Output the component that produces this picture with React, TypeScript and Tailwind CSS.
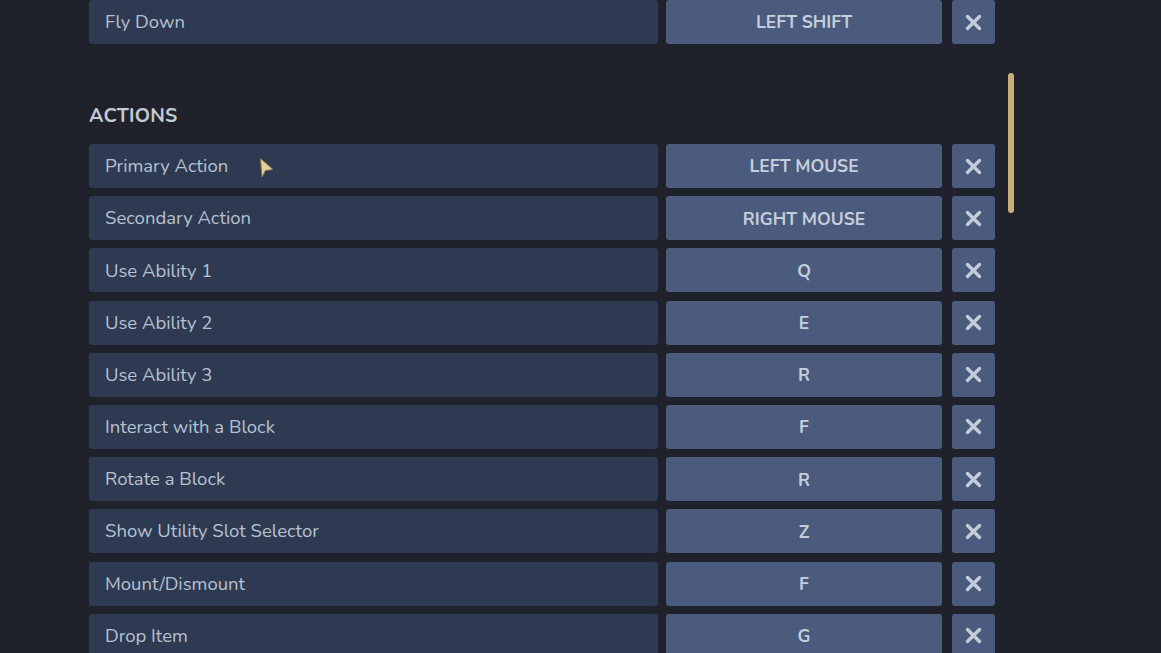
import React from 'react';

const actions: [string, string][] = [
  ['Primary Action', 'LEFT MOUSE'],
  ['Secondary Action', 'RIGHT MOUSE'],
  ['Use Ability 1', 'Q'],
  ['Use Ability 2', 'E'],
  ['Use Ability 3', 'R'],
  ['Interact with a Block', 'F'],
  ['Rotate a Block', 'R'],
  ['Show Utility Slot Selector', 'Z'],
  ['Mount/Dismount', 'F'],
  ['Drop Item', 'G'],
];

function Cross() {
  return (
    <svg width="17" height="17" viewBox="0 0 17 17" fill="none">
      <path d="M2.5 2.5 L14.5 14.5 M14.5 2.5 L2.5 14.5" stroke="#c3ccd9" strokeWidth="3.4" strokeLinecap="round" />
    </svg>
  );
}

function BindRow({ label, keyName }: { label: string; keyName: string }) {
  return (
    <div className="flex h-[44px] shrink-0">
      <div className="w-[569px] flex items-center pl-[16px] pt-[2px] rounded-[3px] bg-[#2e3a52] text-[#b7c1d1] text-[18.5px]">
        {label}
      </div>
      <div className="ml-[8px] w-[276px] flex items-center justify-center pt-[1px] rounded-[3px] bg-[#4b5b7d] text-[#c5cedb] text-[17.5px] font-bold">
        {keyName}
      </div>
      <div className="ml-[10px] w-[43px] flex items-center justify-center rounded-[3px] bg-[#4b5b7d]">
        <Cross />
      </div>
    </div>
  );
}

export default function App() {
  return (
    <div
      className="relative w-[1161px] h-[653px] overflow-hidden bg-[#1f222b]"
      style={{ fontFamily: 'Nunito, Lato, "Noto Sans", sans-serif' }}
    >
      <div className="flex">
        <div className="pl-[89px] flex flex-col">
          <BindRow label="Fly Down" keyName="LEFT SHIFT" />

          <h2 className="pt-[58px] pb-[14px] h-[100px] leading-[28px] text-[19.5px] font-bold text-[#c4cad4] tracking-[0.2px]">
            ACTIONS
          </h2>

          <div className="flex flex-col gap-[8.2px]">
            {actions.map(([label, k], i) => (
              <BindRow key={i} label={label} keyName={k} />
            ))}
          </div>
        </div>

        {/* scrollbar */}
        <div className="ml-[13px] pt-[73px]">
          <div className="w-[6px] h-[140px] rounded-full bg-[#c9ad74]" />
        </div>
      </div>

      {/* mouse cursor */}
      <svg className="absolute left-[259px] top-[157px]" width="16" height="22" viewBox="0 0 16 22">
        <path d="M1.5 1.5 L14 12.5 L6.5 13.5 L3 20 Z" fill="#e6cf95" stroke="#8a7550" strokeWidth="0.8" strokeLinejoin="round" />
      </svg>
    </div>
  );
}
